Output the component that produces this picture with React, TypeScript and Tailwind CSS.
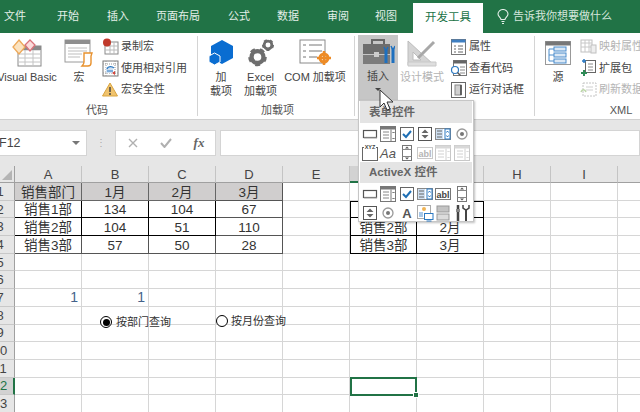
import React from 'react';

const tabs = [
  { label: '文件', w: 'w-[43px] pr-[13px]' },
  { label: '开始', w: 'w-[50px]' },
  { label: '插入', w: 'w-[50px]' },
  { label: '页面布局', w: 'w-[70px]' },
  { label: '公式', w: 'w-[52px]' },
  { label: '数据', w: 'w-[46px]' },
  { label: '审阅', w: 'w-[54px]' },
  { label: '视图', w: 'w-[42px]' },
];

const colLetters = ['A', 'B', 'C', 'D', 'E', 'F', 'G', 'H', 'I', 'J'];

// table contents by row number, first four columns
const leftTable: Record<number, string[]> = {
  1: ['销售部门', '1月', '2月', '3月'],
  2: ['销售1部', '134', '104', '67'],
  3: ['销售2部', '104', '51', '110'],
  4: ['销售3部', '57', '50', '28'],
};
const rightTable: Record<number, string[]> = {
  2: ['销售1部', '1月'],
  3: ['销售2部', '2月'],
  4: ['销售3部', '3月'],
};

const rows = Array.from({ length: 13 }, (_, i) => i + 1);

// ---- ribbon icons ----
const VbIcon = () => (
  <svg width="30" height="28" viewBox="0 0 30 28">
    <rect x="6" y="7" width="23" height="20" fill="#fff" stroke="#8a8a8a" />
    <path d="M6 11h23M6 15h23M6 19h23M6 23h23M13 11v16M21 11v16" stroke="#c4c4c4" />
    <rect x="6" y="7" width="23" height="4" fill="#8a8a8a" />
    <path d="M7 1l6 7-6 7-6-7z" fill="#fbe3c0" stroke="#eda95a" strokeWidth="1.3" />
    <path d="M18 1l5 5-5 6-5-6z" fill="#fbdcdc" stroke="#d9737a" strokeWidth="1.3" />
  </svg>
);
const MacroIcon = () => (
  <svg width="30" height="28" viewBox="0 0 30 28">
    <rect x="1" y="1" width="25" height="22" fill="#fff" stroke="#9a9a9a" />
    <rect x="1" y="1" width="25" height="4" fill="#8f8f8f" />
    <path d="M4 9h19M4 12h19M4 15h14M4 18h12" stroke="#bdbdbd" />
    <path d="M20 14h8l-1 3v7c0 2-1 3-3 3h-6c1-1 2-2 2-4z" fill="#fff" stroke="#e8912d" strokeWidth="1.4" />
  </svg>
);
const RecordIcon = () => (
  <svg width="17" height="17" viewBox="0 0 17 17">
    <rect x="3" y="4" width="13" height="12" fill="#fff" stroke="#8a8a8a" />
    <path d="M3 8h13M3 12h13M8 4v12M12 4v12" stroke="#bbb" />
    <circle cx="5" cy="4.5" r="4" fill="#c0392b" />
  </svg>
);
const RelativeIcon = () => (
  <svg width="17" height="17" viewBox="0 0 17 17">
    <rect x="1" y="1" width="15" height="15" fill="#fff" stroke="#777" />
    <path d="M1 4h15M1 13h15M4 1v15M13 1v15" stroke="#999" strokeDasharray="1 1" />
    <rect x="4" y="7" width="7" height="6" fill="#cfe0f2" />
    <path d="M5 9c1-3 5-3 7-1M5 11h6" stroke="#2b79c2" strokeWidth="1.2" fill="none" />
    <path d="M10 13l3-2v4z" fill="#d1453b" />
  </svg>
);
const WarnIcon = () => (
  <svg width="16" height="15" viewBox="0 0 16 15">
    <path d="M8 1l7.5 13H.5z" fill="#f0c36d" stroke="#d9a441" />
    <path d="M8 5v5M8 11v2" stroke="#444" strokeWidth="1.5" />
  </svg>
);
const AddinIcon = () => (
  <svg width="26" height="27" viewBox="0 0 26 27">
    <path d="M14 1l11 6v12l-11 6-11-6V7z" fill="#0a6dd1" />
    <path d="M6.500 14l5.500 3v6l-5.500 3L1 23v-6z" fill="#0a6dd1" stroke="#fff" />
  </svg>
);
const Gear = ({ cx, cy, r }: { cx: number; cy: number; r: number }) => (
  <g>
    <circle cx={cx} cy={cy} r={r * 0.7} fill="none" stroke="#6e6e6e" strokeWidth={r * 0.5} />
    <circle cx={cx} cy={cy} r={r * 0.92} fill="none" stroke="#6e6e6e" strokeWidth={r * 0.35} strokeDasharray={r * 0.55 + ' ' + r * 0.6} />
  </g>
);
const ExcelAddinIcon = () => (
  <svg width="26" height="28" viewBox="0 0 26 28">
    <Gear cx={9.5} cy={18} r={8.5} />
    <Gear cx={20} cy={6} r={5.5} />
  </svg>
);
const ComIcon = () => (
  <svg width="32" height="28" viewBox="0 0 32 28">
    <rect x="1" y="1" width="25" height="23" fill="#fff" stroke="#8a8a8a" />
    <path d="M4 6h3M10 6h13M4 12h3M10 12h13M4 18h3M10 18h8" stroke="#777" />
    <circle cx="25" cy="19" r="4" fill="none" stroke="#ed8b26" strokeWidth="3" />
    <path d="M25 12v14M18 19h14" stroke="#ed8b26" strokeWidth="2.5" />
  </svg>
);
const ToolboxIcon = () => (
  <svg width="33" height="28" viewBox="0 0 33 28">
    <path d="M10 6V2h12v4" fill="none" stroke="#666" strokeWidth="2" />
    <rect x="1" y="6" width="27" height="10" fill="#6d6d6d" />
    <rect x="1" y="17" width="27" height="9" fill="#7c7c7c" />
    <rect x="12" y="14" width="5" height="5" fill="#ccc" />
    <path d="M24 12v13M31 10v15" stroke="#1e70bf" strokeWidth="3" />
    <path d="M22 9l2 4 2-4M29 8l2 4 2-4" stroke="#1e70bf" strokeWidth="1.5" fill="none" />
  </svg>
);
const DesignIcon = () => (
  <svg width="32" height="28" viewBox="0 0 32 28">
    <path d="M2 2v24h26z M7 13v8h8z" fill="#d4d4d4" fillRule="evenodd" stroke="#bcbcbc" />
    <path d="M12 19L28 3" stroke="#a8a8a8" strokeWidth="3" />
    <path d="M2 23h28v4H2z" fill="#dedede" stroke="#c8c8c8" />
  </svg>
);
const PropsIcon = () => (
  <svg width="15" height="16" viewBox="0 0 15 16">
    <rect x=".5" y=".5" width="14" height="15" fill="#fff" stroke="#777" />
    <rect x=".5" y=".5" width="14" height="3" fill="#3f7fc1" />
    <path d="M3 7h2M7 7h5M3 10h2M7 10h5M3 13h2M7 13h5" stroke="#666" />
  </svg>
);
const ViewCodeIcon = () => (
  <svg width="17" height="16" viewBox="0 0 17 16">
    <rect x="3.5" y=".5" width="13" height="15" fill="#fff" stroke="#777" />
    <rect x="3.5" y=".5" width="13" height="3" fill="#666" />
    <path d="M10 7h5M10 10h5M10 13h5" stroke="#888" />
    <circle cx="5" cy="10" r="3.5" fill="#fff" stroke="#2b79c2" strokeWidth="1.2" />
    <path d="M7.5 12.5l3 3" stroke="#555" strokeWidth="1.5" />
  </svg>
);
const DialogIcon = () => (
  <svg width="15" height="16" viewBox="0 0 15 16">
    <rect x=".5" y=".5" width="14" height="15" fill="#fff" stroke="#666" />
    <rect x="4" y="3" width="6" height="10" fill="#d0d0d0" stroke="#888" />
    <path d="M10 3v10" stroke="#444" strokeWidth="1.5" />
  </svg>
);
const SourceIcon = () => (
  <svg width="26" height="24" viewBox="0 0 26 24">
    <rect x=".5" y=".5" width="25" height="23" fill="#fff" stroke="#999" />
    <rect x=".5" y=".5" width="25" height="4" fill="#777" />
    <rect x="9" y="6" width="12" height="4" fill="#dbe8f5" stroke="#4a8ccb" />
    <rect x="9" y="12" width="12" height="4" fill="#dbe8f5" stroke="#4a8ccb" />
    <rect x="9" y="18" width="12" height="4" fill="#dbe8f5" stroke="#4a8ccb" />
    <path d="M4 8v12M4 8h5M4 14h5M4 20h5" stroke="#4a8ccb" fill="none" />
  </svg>
);
const MapPropsIcon = () => (
  <svg width="17" height="15" viewBox="0 0 17 15">
    <rect x="1" y="1" width="11" height="12" fill="#fff" stroke="#c0c0c0" />
    <path d="M1 4h11M1 8h11M5 1v12M9 1v12" stroke="#c8c8c8" />
    <rect x="11" y="6" width="5" height="8" fill="#eee" stroke="#c0c0c0" />
  </svg>
);
const ExpansionIcon = () => (
  <svg width="17" height="18" viewBox="0 0 17 18">
    <rect x="5.5" y="1.5" width="10" height="12" fill="#fff" stroke="#666" />
    <path d="M8 5h5M8 8h5M8 11h5" stroke="#888" />
    <path d="M4 0v4M2 2h4" stroke="#2b79c2" strokeWidth="1.5" />
    <path d="M4 11v6M1 14h6" stroke="#2e8b57" strokeWidth="2" />
  </svg>
);
const RefreshIcon = () => (
  <svg width="17" height="15" viewBox="0 0 17 15">
    <rect x="3" y="1" width="13" height="13" fill="#fff" stroke="#c4c4c4" strokeDasharray="2 1" />
    <path d="M6 5h7M6 8h7" stroke="#cfcfcf" />
    <path d="M1 10c1-3 4-3 5 0" stroke="#bcd7a8" fill="none" strokeWidth="1.5" />
  </svg>
);

// ---- small control icons in the insert menu ----
const S = ({ children }: { children: React.ReactNode }) => (
  <svg width="18" height="18" viewBox="0 0 18 18">{children}</svg>
);
const ButtonCtl = () => (
  <S>
    <rect x="2.5" y="5.5" width="13" height="7" fill="#fff" stroke="#555" strokeWidth="1.2" />
    <path d="M3 13h13" stroke="#aaa" />
  </S>
);
const ComboCtl = ({ faded }: { faded?: boolean }) => (
  <S>
    <rect x="1.5" y="1.5" width="15" height="15" fill="#fff" stroke={faded ? '#c8c8c8' : '#777'} />
    <rect x="1.5" y="1.5" width="15" height="3" fill={faded ? '#d8d8d8' : '#777'} />
    <path d="M4 7h6M4 10h6M4 13h6" stroke={faded ? '#d0d0d0' : '#888'} />
    <path d="M12 4.5v12" stroke={faded ? '#d0d0d0' : '#777'} />
    <path d="M13.5 7l1 1 1-1M13.5 13l1 1 1-1" stroke={faded ? '#d0d0d0' : '#555'} fill="none" />
  </S>
);
const CheckCtl = () => (
  <S>
    <rect x="2.5" y="2.5" width="13" height="13" fill="#fff" stroke="#666" />
    <path d="M5 9l3 3 5-6" stroke="#1f6fb5" strokeWidth="2" fill="none" />
  </S>
);
const SpinCtl = () => (
  <S>
    <rect x="2.5" y="2.5" width="13" height="13" fill="#fff" stroke="#555" />
    <path d="M9 4.5l3.5 3.5h-7zM9 13.5l3.5-3.5h-7z" fill="#666" />
  </S>
);
const ListCtl = () => (
  <S>
    <rect x="1.5" y="3.5" width="15" height="11" fill="#fff" stroke="#888" />
    <rect x="2" y="4" width="7" height="10" fill="#cfe0f2" />
    <path d="M3 6h5M3 9h5M3 12h5" stroke="#666" />
    <rect x="11" y="4" width="5" height="10" fill="#fff" stroke="#2b79c2" />
    <path d="M12.5 7.5l1-1.5 1 1.5M12.5 10.5l1 1.5 1-1.5" stroke="#2b79c2" fill="none" />
  </S>
);
const RadioCtl = () => (
  <S>
    <circle cx="9" cy="9" r="5" fill="#fff" stroke="#999" strokeWidth="1.3" />
    <circle cx="9" cy="9" r="2" fill="#777" />
  </S>
);
const GroupCtl = () => (
  <S>
    <rect x="1.5" y="3.5" width="15" height="13" fill="#fff" stroke="#666" />
    <rect x="3" y="0" width="12" height="5" fill="#fff" />
    <text x="9" y="5" textAnchor="middle" fontSize="5.5" fontWeight="700" fill="#444" fontFamily="Liberation Sans, sans-serif">XYZ</text>
  </S>
);
const LabelCtl = () => (
  <S>
    <text x="9" y="14" textAnchor="middle" fontSize="13" fontStyle="italic" fill="#555" fontFamily="Liberation Sans, sans-serif">Aa</text>
  </S>
);
const ScrollCtl = () => (
  <S>
    <rect x="4.5" y="1.5" width="9" height="15" fill="#fff" stroke="#777" />
    <path d="M4.5 5.5h9M4.5 12.5h9" stroke="#888" />
    <path d="M9 2.5l2 2h-4zM9 15.5l2-2h-4z" fill="#555" />
  </S>
);
const TextCtl = ({ faded }: { faded?: boolean }) => (
  <S>
    <rect x="1.5" y="3.5" width="15" height="11" fill="#fff" stroke={faded ? '#c8c8c8' : '#777'} />
    <text x="9" y="12.5" textAnchor="middle" fontSize="9" fontWeight="700" fill={faded ? '#b4b4b4' : '#444'} fontFamily="Liberation Sans, sans-serif">abl</text>
  </S>
);
const LetterCtl = () => (
  <S>
    <text x="9" y="14" textAnchor="middle" fontSize="13" fontWeight="700" fill="#555" fontFamily="Liberation Sans, sans-serif">A</text>
  </S>
);
const ImageCtl = () => (
  <S>
    <rect x="1.5" y="1.5" width="13" height="13" fill="#fff" stroke="#aaa" />
    <circle cx="8" cy="5" r="2" fill="#f0b455" />
    <rect x="3" y="8" width="4" height="5" fill="#a8c8e8" />
    <rect x="8.5" y="9.5" width="8.5" height="6" fill="#fff" stroke="#2b79c2" />
    <path d="M10.5 17h5" stroke="#2b79c2" />
  </S>
);
const StackCtl = () => (
  <S>
    <rect x="3" y="2" width="12" height="6" fill="#c4c4c4" stroke="#999" />
    <rect x="3" y="10" width="12" height="6" fill="#dcdcdc" stroke="#999" />
  </S>
);
const ToolsCtl = () => (
  <S>
    <path d="M5 1v4M5 8v9" stroke="#444" strokeWidth="2.5" />
    <path d="M3 5h4v3H3z" fill="#888" />
    <path d="M13 6v11" stroke="#444" strokeWidth="2" />
    <path d="M10 1v3l3 2 3-2V1" stroke="#444" strokeWidth="1.5" fill="none" />
  </S>
);

const MenuHeader = ({ children, className }: { children: React.ReactNode; className: string }) => (
  <div className={'mx-px bg-[#e4e4e4] flex items-center pl-[9px] text-[11.5px] font-semibold text-[#666] leading-none ' + className}>
    {children}
  </div>
);
const MenuGrid = ({ items }: { items: React.ReactNode[] }) => (
  <div className="grid grid-cols-6 auto-rows-[19px] px-[2px] pt-[1px]">
    {items.map((item, i) => (
      <div key={i} className="flex items-center justify-center">{item}</div>
    ))}
  </div>
);

const BigButton = ({ icon, label, className = '', muted = false }: { icon: React.ReactNode; label: React.ReactNode; className?: string; muted?: boolean }) => (
  <div className={'flex flex-col items-center shrink-0 pt-[1px] ' + className}>
    <div className="h-[31px] flex items-center justify-center">{icon}</div>
    <div className={'mt-[2px] text-center text-[11px] leading-[14px] whitespace-nowrap ' + (muted ? 'text-[#b4b4b4]' : 'text-[#444]')}>{label}</div>
  </div>
);

const SmallButton = ({ icon, label, muted = false }: { icon: React.ReactNode; label: string; muted?: boolean }) => (
  <div className="h-[21.5px] flex items-center gap-[2px]">
    <div className="w-[18px] flex justify-center shrink-0">{icon}</div>
    <span className={'text-[11px] leading-none whitespace-nowrap ' + (muted ? 'text-[#b4b4b4]' : 'text-[#444]')}>{label}</span>
  </div>
);

const Group = ({ label, className, children }: { label: string; className: string; children: React.ReactNode }) => (
  <div className={'flex flex-col shrink-0 h-[80px] mt-[3px] border-r border-[#d4d4d4] ' + className}>
    <div className="flex-1 flex">{children}</div>
    <div className="h-[12px] flex items-center justify-center text-[11px] leading-none text-[#555]">{label}</div>
  </div>
);

const Cell = ({ row, col }: { row: number; col: number }) => {
  let text = '';
  let cls = 'border-r border-b border-[#d6d6d6]';
  if (row <= 4 && col < 4) {
    text = leftTable[row][col];
    cls = 'border-r border-b ' + (row === 4 || col === 3 ? 'border-[#555]' : row === 1 ? 'border-[#666]' : 'border-black');
    if (row === 1) cls += ' bg-[#d0cece]';
  } else if (row >= 2 && row <= 4 && (col === 5 || col === 6)) {
    text = rightTable[row][col - 5];
    cls = 'border-r border-b border-black';
    if (col === 5) cls += ' border-l';
    if (row === 2) cls += ' border-t';
  } else if (row === 7 && col < 2) {
    return (
      <div className="border-r border-b border-[#d6d6d6] flex items-center justify-end pr-[3px] text-[14px] text-[#44628a] leading-none">1</div>
    );
  } else if (row === 12 && col === 5) {
    return (
      <div className="relative border-2 border-[#217346] -mt-px h-[19.5px]">
        <div className="absolute right-[-4px] bottom-[-4px] w-[6px] h-[6px] bg-[#217346] border border-white" />
      </div>
    );
  }
  return (
    <div className={cls + ' flex items-center justify-center pt-[2px] text-[13.5px] text-[#333] leading-none overflow-hidden'}>{text}</div>
  );
};

const App: React.FC = () => {
  return (
    <div className="relative w-[640px] h-[412px] overflow-hidden bg-[#e6e6e6] font-['Liberation_Sans','Noto_Sans_CJK_SC',sans-serif]">
      {/* Tabs */}
      <div className="h-[33px] bg-[#217346] flex text-[11px] text-[#e4efe9] overflow-hidden">
        {tabs.map((t) => (
          <div key={t.label} className={t.w + ' shrink-0 flex items-center justify-center pb-[1px]'}>{t.label}</div>
        ))}
        <div className="w-[70px] shrink-0 mt-[3px] ml-[6px] bg-white text-[#217346] flex items-center justify-center text-[11.5px]">开发工具</div>
        <div className="flex items-center ml-[14px] gap-[4px] text-[#d5e6dc] pb-[1px]">
          <svg width="12" height="15" viewBox="0 0 12 15" fill="none" stroke="#e4efe9" strokeWidth="1.1">
            <path d="M4 10.5C4 8.5 1 7.5 1 5a5 4.5 0 0 1 10 0c0 2.5-3 3.5-3 5.5zM4.5 12.5h3M5 14.5h2" />
          </svg>
          <span>告诉我你想要做什么</span>
        </div>
      </div>

      {/* Ribbon */}
      <div className="h-[87px] bg-white flex overflow-hidden border-b border-[#d0d0d0]">
        <Group label="代码" className="w-[211px] ml-[-13px] pl-[10px]">
          <BigButton icon={<VbIcon />} label="Visual Basic" className="w-[60px]" />
          <BigButton icon={<MacroIcon />} label="宏" className="w-[44px]" />
          <div className="flex flex-col">
            <SmallButton icon={<RecordIcon />} label="录制宏" />
            <SmallButton icon={<RelativeIcon />} label="使用相对引用" />
            <SmallButton icon={<WarnIcon />} label="宏安全性" />
          </div>
        </Group>
        <Group label="加载项" className="w-[157px] pl-[3px]">
          <BigButton icon={<AddinIcon />} label={<>加<br />载项</>} className="w-[40px]" />
          <BigButton icon={<ExcelAddinIcon />} label={<>Excel<br />加载项</>} className="w-[39px]" />
          <BigButton icon={<ComIcon />} label="COM 加载项" className="w-[70px]" />
        </Group>
        <Group label="" className="w-[180px] pl-[3px]">
          <div className="w-[40px] -mt-px h-[65px] bg-[#c6c6c6] flex flex-col items-center">
            <BigButton icon={<ToolboxIcon />} label="插入" className="w-[40px]" />
            <div className="mt-[5px] w-0 h-0 border-l-[3px] border-r-[3px] border-t-[3px] border-l-transparent border-r-transparent border-t-[#444]" />
          </div>
          <BigButton icon={<DesignIcon />} label="设计模式" className="w-[48px]" muted />
          <div className="flex flex-col ml-[3px]">
            <SmallButton icon={<PropsIcon />} label="属性" />
            <SmallButton icon={<ViewCodeIcon />} label="查看代码" />
            <SmallButton icon={<DialogIcon />} label="运行对话框" />
          </div>
        </Group>
        <Group label="XML" className="w-[166px] pl-[6px] border-r-0">
          <BigButton icon={<SourceIcon />} label="源" className="w-[34px]" />
          <div className="flex flex-col ml-[4px]">
            <SmallButton icon={<MapPropsIcon />} label="映射属性" muted />
            <SmallButton icon={<ExpansionIcon />} label="扩展包" />
            <SmallButton icon={<RefreshIcon />} label="刷新数据" muted />
          </div>
        </Group>
      </div>

      {/* Formula bar */}
      <div className="h-[26px] mt-[10px] flex text-[12.5px] text-[#444]">
        <div className="w-[88px] bg-white border border-[#d4d4d4] flex items-center justify-between pr-[6px] ml-[-1px]">
          <span className="leading-none ml-[-1px]">F12</span>
          <div className="w-0 h-0 border-l-[4px] border-r-[4px] border-t-[4px] border-l-transparent border-r-transparent border-t-[#777]" />
        </div>
        <div className="w-[28px] flex items-center justify-center text-[#aaa] text-[10px] leading-none">⋮</div>
        <div className="w-[101px] bg-white border border-[#d4d4d4] flex items-center">
          <div className="w-[33px] flex justify-center">
            <svg width="10" height="10" viewBox="0 0 10 10"><path d="M1 1l8 8M9 1l-8 8" stroke="#b0b0b0" strokeWidth="1.4" /></svg>
          </div>
          <div className="w-[34px] flex justify-center">
            <svg width="12" height="10" viewBox="0 0 12 10"><path d="M1 5l3.5 4L11 1" stroke="#b0b0b0" strokeWidth="2" fill="none" /></svg>
          </div>
          <div className="w-[32px] flex justify-center font-['Liberation_Serif',serif] italic font-bold text-[13px] text-[#666]">fx</div>
        </div>
        <div className="flex-1 ml-[4px] bg-white border border-[#d4d4d4]" />
      </div>

      {/* Sheet */}
      <div className="mt-[10px] grid grid-cols-[15px_repeat(10,67px)] grid-rows-[17px] auto-rows-[17.7px] bg-white">
        <div className="bg-[#e6e6e6] border-r border-b border-[#a0a0a0] overflow-hidden flex items-end justify-end p-[2px]">
          <div className="w-0 h-0 border-l-[10px] border-b-[10px] border-l-transparent border-b-[#b4b4b4]" />
        </div>
        {colLetters.map((c) => (
          <div key={c} className={(c === 'F' ? 'bg-[#d2d2d2] border-b-2 border-b-[#217346]' : 'bg-[#e6e6e6] border-b border-b-[#a0a0a0]') + ' pt-[1px] border-r border-r-[#c4c4c4] flex items-center justify-center text-[13px] text-[#444] leading-none'}>{c}</div>
        ))}
        {rows.map((r) => (
          <React.Fragment key={r}>
            <div className={'overflow-hidden border-b border-[#c8c8c8] border-r ' + (r === 12 ? 'bg-[#d2d2d2] border-r-2 border-r-[#217346] text-[#217346]' : 'bg-[#e6e6e6] border-r-[#a0a0a0] text-[#444]')}>
              <div className="w-[30px] ml-[-15px] h-full flex items-center justify-center text-[13px] leading-none">{r}</div>
            </div>
            {colLetters.map((_, c) => (
              <Cell key={c} row={r} col={c} />
            ))}
          </React.Fragment>
        ))}
      </div>

      {/* Form controls floating over the sheet */}
      <div className="absolute left-[100px] top-[316px] flex items-center gap-[4px] text-[11px] leading-none text-[#333]">
        <div className="w-[12px] h-[12px] rounded-full border border-black bg-white flex items-center justify-center">
          <div className="w-[7px] h-[7px] rounded-full bg-black" />
        </div>
        <span>按部门查询</span>
      </div>
      <div className="absolute left-[216px] top-[315px] flex items-center gap-[3px] text-[11px] leading-none text-[#333]">
        <div className="w-[12px] h-[12px] rounded-full border border-black bg-white" />
        <span>按月份查询</span>
      </div>

      {/* Insert dropdown */}
      <div className="absolute left-[358px] top-[100px] w-[116px] h-[122px] bg-white border border-[#c6c6c6] shadow-[1px_1px_2px_rgba(0,0,0,0.25)]">
        <MenuHeader className="h-[22px] pt-[2px]">表单控件</MenuHeader>
        <MenuGrid items={[<ButtonCtl />, <ComboCtl />, <CheckCtl />, <SpinCtl />, <ListCtl />, <RadioCtl />, <GroupCtl />, <LabelCtl />, <ScrollCtl />, <TextCtl faded />, <ComboCtl faded />, <ComboCtl faded />]} />
        <MenuHeader className="h-[21px]">ActiveX 控件</MenuHeader>
        <MenuGrid items={[<ButtonCtl />, <ComboCtl />, <CheckCtl />, <ListCtl />, <TextCtl />, <ScrollCtl />, <SpinCtl />, <RadioCtl />, <LetterCtl />, <ImageCtl />, <StackCtl />, <ToolsCtl />]} />
      </div>

      {/* Mouse pointer */}
      <svg className="absolute left-[379px] top-[89px]" width="15" height="23" viewBox="0 0 15 23">
        <path d="M1 1v17l4-4 3 7 3-1-3-7h6z" fill="#fff" stroke="#333" />
      </svg>
    </div>
  );
};

export default App;
